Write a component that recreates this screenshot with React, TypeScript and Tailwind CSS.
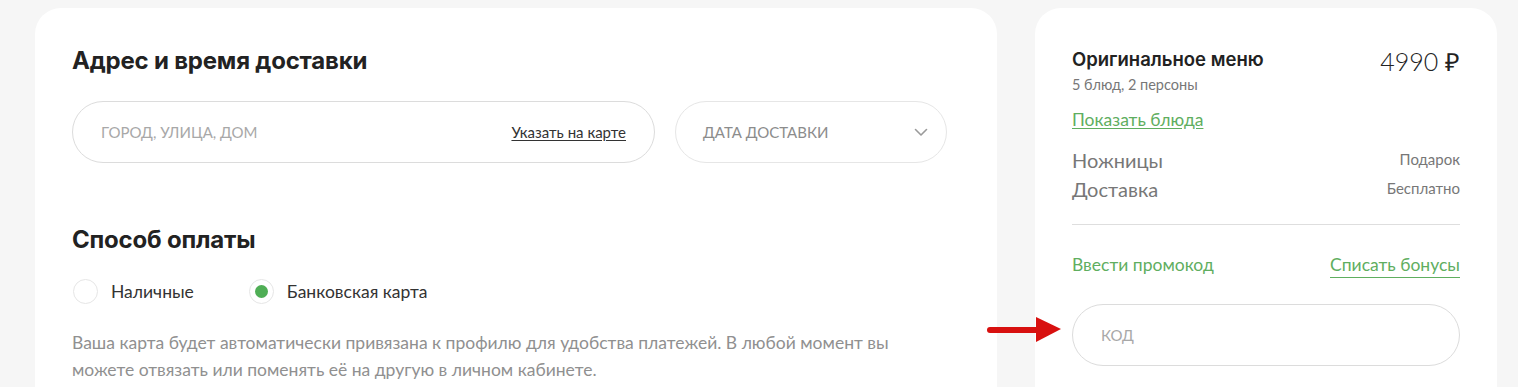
import React from 'react';

const green = 'text-[#5fae5f]';

const Radio: React.FC<{ checked?: boolean; label: string }> = ({ checked, label }) => (
    <label className="flex items-center gap-[13px] cursor-pointer">
        <span className="w-[25px] h-[25px] rounded-full border border-[#e6e6e6] bg-white flex items-center justify-center">
            {checked && <span className="w-[13px] h-[13px] rounded-full bg-[#4fae55]" />}
        </span>
        <span className="text-[17.5px] leading-[20px] text-[#333]">{label}</span>
    </label>
);

export default function App() {
    return (
        <div className="relative min-h-screen bg-[#f6f6f6] font-['Lato','Liberation_Sans',sans-serif] overflow-hidden">
            <div className="flex gap-[38px] pl-[35px] pt-[8px]">

                {/* Delivery + payment */}
                <div className="w-[962px] h-[420px] bg-white rounded-[26px] px-[37px] pt-[39px]">
                    <h2 className="font-['Inter',sans-serif] font-bold text-[24px] leading-[28px] text-[#222] tracking-[-0.2px]">
                        Адрес и время доставки
                    </h2>

                    <div className="flex gap-[20px] mt-[26px]">
                        <div className="w-[583px] h-[62px] rounded-full border border-[#dcdcdc] flex items-center justify-between pl-[28px] pr-[28px]">
                            <span className="text-[15px] text-[#a8a8a8]">ГОРОД, УЛИЦА, ДОМ</span>
                            <span className="text-[15px] text-[#333] underline underline-offset-2">Указать на карте</span>
                        </div>
                        <div className="w-[272px] h-[62px] rounded-full border border-[#e6e6e6] flex items-center justify-between pl-[27px] pr-[18px]">
                            <span className="text-[15px] text-[#8c8c8c]">ДАТА ДОСТАВКИ</span>
                            <svg width="14" height="9" viewBox="0 0 14 9" fill="none">
                                <path d="M1.5 1.5 L7 7 L12.5 1.5" stroke="#9a9a9a" strokeWidth="1.6" strokeLinecap="round" strokeLinejoin="round" />
                            </svg>
                        </div>
                    </div>

                    <h2 className="font-['Inter',sans-serif] font-bold text-[24px] leading-[28px] text-[#222] tracking-[-0.2px] mt-[63px]">
                        Способ оплаты
                    </h2>

                    <div className="flex gap-[55px] mt-[25px] pl-[1px]">
                        <Radio label="Наличные" />
                        <Radio checked label="Банковская карта" />
                    </div>

                    <p className="mt-[25px] text-[17.5px] leading-[27px] text-[#909090] w-[845px]">
                        Ваша карта будет автоматически привязана к профилю для удобства платежей. В любой момент вы
                        можете отвязать или поменять её на другую в личном кабинете.
                    </p>
                </div>

                {/* Order summary */}
                <div className="w-[462px] h-[420px] bg-white rounded-[26px] px-[37px] pt-[39px]">
                    <div className="flex justify-between items-start">
                        <div>
                            <div className="font-['Inter',sans-serif] font-semibold text-[18.5px] leading-[24px] text-[#222]">
                                Оригинальное меню
                            </div>
                            <div className="text-[14.5px] leading-[18px] text-[#777] mt-[5px]">5 блюд, 2 персоны</div>
                        </div>
                        <div className="text-[25px] leading-[30px] text-[#222] font-light -mt-[1px]">4990 ₽</div>
                    </div>

                    <div className={`mt-[15px] text-[17.5px] leading-[22px] ${green} underline underline-offset-2`}>Показать блюда</div>

                    <div className="mt-[14px] flex flex-col">
                        <div className="flex justify-between items-center h-[29px]">
                            <span className="text-[20px] text-[#777]">Ножницы</span>
                            <span className="text-[15px] text-[#777]">Подарок</span>
                        </div>
                        <div className="flex justify-between items-center h-[29px]">
                            <span className="text-[20px] text-[#777]">Доставка</span>
                            <span className="text-[15px] text-[#777]">Бесплатно</span>
                        </div>
                    </div>

                    <div className="mt-[21px] border-t border-[#dedede]" />

                    <div className="mt-[29px] flex justify-between items-start">
                        <span className={`text-[17.5px] leading-[22px] ${green}`}>Ввести промокод</span>
                        <span className={`text-[17.5px] leading-[22px] ${green} border-b border-[#5fae5f] pb-[1px]`}>Списать бонусы</span>
                    </div>

                    <div className="mt-[26px] h-[62px] rounded-full border border-[#dcdcdc] flex items-center pl-[28px]">
                        <span className="text-[15px] text-[#a8a8a8]">КОД</span>
                    </div>
                </div>
            </div>

            {/* Annotation arrow */}
            <svg className="absolute left-[986px] top-[315px]" width="78" height="28" viewBox="0 0 78 28">
                <line x1="4" y1="15" x2="54" y2="15" stroke="#d8100f" strokeWidth="6" strokeLinecap="round" />
                <polygon points="50,2 75,14 50,27" fill="#d8100f" />
            </svg>
        </div>
    );
}
